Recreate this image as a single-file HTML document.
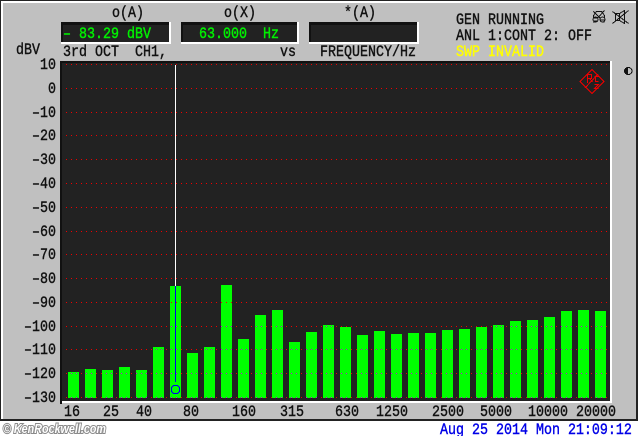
<!DOCTYPE html>
<html><head><meta charset="utf-8"><style>
html,body{margin:0;padding:0;background:#fff;width:640px;height:436px;overflow:hidden}
svg{display:block}
text{font-family:"Liberation Mono",monospace;font-size:13.33px;font-weight:normal;fill:#111;stroke:#111;stroke-width:.35px;white-space:pre}
.c{shape-rendering:crispEdges}
</style></head><body>
<svg width="640" height="436" viewBox="0 0 640 436" xmlns="http://www.w3.org/2000/svg">
<defs><clipPath id="b"><path d="M68 372h11V398h-11zM85 369h11V398h-11zM102 370h11V398h-11zM119 367h11V398h-11zM136 370h11V398h-11zM153 347h11V398h-11zM170 286h11V398h-11zM187 353h11V398h-11zM204 347h11V398h-11zM221 285h11V398h-11zM238 339h11V398h-11zM255 315h11V398h-11zM272 310h11V398h-11zM289 342h11V398h-11zM306 332h11V398h-11zM323 325h11V398h-11zM340 327h11V398h-11zM357 335h11V398h-11zM374 331h11V398h-11zM391 334h11V398h-11zM408 333h11V398h-11zM425 333h11V398h-11zM442 330h11V398h-11zM459 329h11V398h-11zM476 327h11V398h-11zM493 325h11V398h-11zM510 321h11V398h-11zM527 320h11V398h-11zM544 317h11V398h-11zM561 311h11V398h-11zM578 310h11V398h-11zM595 311h11V398h-11z"/></clipPath></defs>
<g class="c">
<rect x="0" y="0" width="638" height="421" fill="#222"/>
<rect x="1" y="1" width="635" height="418" fill="#fff"/>
<rect x="3" y="3" width="633" height="416" fill="#c0c0c0"/>
<!-- display boxes -->
<rect x="61" y="22" width="110" height="22" fill="#fff"/><rect x="61" y="22" width="108" height="20" fill="#111"/><rect x="63" y="25" width="106" height="17" fill="#222"/>
<rect x="181" y="22" width="118" height="22" fill="#fff"/><rect x="181" y="22" width="116" height="20" fill="#111"/><rect x="183" y="25" width="114" height="17" fill="#222"/>
<rect x="309" y="22" width="110" height="22" fill="#fff"/><rect x="309" y="22" width="108" height="20" fill="#111"/><rect x="311" y="25" width="106" height="17" fill="#222"/>
<!-- plot -->
<rect x="60" y="61" width="552" height="342" fill="#fff"/>
<rect x="60" y="61" width="550" height="340" fill="#111"/>
<rect x="62" y="63" width="548" height="338" fill="#222"/>
<rect x="60" y="399" width="2" height="5" fill="#111"/>
<!-- bars -->
<path fill="#0f0" d="M68 372h11V398h-11zM85 369h11V398h-11zM102 370h11V398h-11zM119 367h11V398h-11zM136 370h11V398h-11zM153 347h11V398h-11zM170 286h11V398h-11zM187 353h11V398h-11zM204 347h11V398h-11zM221 285h11V398h-11zM238 339h11V398h-11zM255 315h11V398h-11zM272 310h11V398h-11zM289 342h11V398h-11zM306 332h11V398h-11zM323 325h11V398h-11zM340 327h11V398h-11zM357 335h11V398h-11zM374 331h11V398h-11zM391 334h11V398h-11zM408 333h11V398h-11zM425 333h11V398h-11zM442 330h11V398h-11zM459 329h11V398h-11zM476 327h11V398h-11zM493 325h11V398h-11zM510 321h11V398h-11zM527 320h11V398h-11zM544 317h11V398h-11zM561 311h11V398h-11zM578 310h11V398h-11zM595 311h11V398h-11z"/>
<!-- grid dots -->
<path stroke="#f00000" stroke-width="1" stroke-dasharray="1 4" fill="none" d="M66 64.5H607M66 88.5H576M66 112.5H607M66 135.5H607M66 159.5H607M66 183.5H607M66 207.5H607M66 231.5H607M66 254.5H607M66 278.5H607M66 302.5H607M66 326.5H607M66 349.5H607M66 373.5H607M66 397.5H607"/>
<path clip-path="url(#b)" stroke="#d000e0" stroke-width="1" stroke-dasharray="1 4" fill="none" d="M66 326.5H607M66 349.5H607M66 373.5H607M66 397.5H607"/>
<!-- cursor -->
<rect x="175" y="65" width="1" height="221" fill="#fff"/>
<rect x="175" y="286" width="1" height="96" fill="#0000f0"/>
<!-- cursor ring -->
<path fill="none" stroke="#0000f0" stroke-width="1" d="M173.5 385.5H177.5L179.5 387.5V391.5L177.5 393.5H173.5L171.5 391.5V387.5Z"/>
<!-- R&S logo -->
<g fill="none" stroke="#f00000" stroke-width="1">
<path d="M592 69.5L604 81.5L592 93.5L580 81.5Z"/>
<path d="M585 88L598 74"/>
<path d="M587.5 74.5V83M587.5 74.5H591.5V78.5H587.5M589.5 78.5L592.5 82M594.5 76.5H598.5M595.5 76.5V81.5H598.5M594.5 84.5H598.5L594.5 88.5H598.5"/>
</g>
<!-- headphones icon -->
<g fill="none" stroke="#111" stroke-width="1">
<path d="M593.5 17.5V15.5L596.5 11.5H601.5L604.5 15.5V17.5"/>
<path d="M593.5 11.5L604.5 22.5M604.5 10.5L593.5 22.5"/>
<circle cx="595.5" cy="19.5" r="2.5" fill="#c0c0c0"/>
<circle cx="602.5" cy="19.5" r="2.5" fill="#c0c0c0"/>
<path d="M593 18H598M600 20H605M593 21H598"/>
</g>
<!-- speaker crossed -->
<g fill="none" stroke="#111" stroke-width="1">
<path d="M615.5 13.5H619.5L624.5 10.5V23.5L619.5 20.5H615.5Z"/>
<path d="M612.5 11.5L628.5 23.5M628.5 10.5L612.5 23.5M619.5 13.5V20.5"/>
</g>
<!-- contrast icon -->
<circle cx="628.5" cy="71" r="3.5" fill="#c0c0c0" stroke="#111"/>
<path d="M628 67A4 4 0 0 0 628 75Z" fill="#111"/>
</g>
<!-- text -->
<g>
<text transform="translate(112,17) scale(1,1.15)">o(A)</text>
<text transform="translate(224,17) scale(1,1.15)">o(X)</text>
<text transform="translate(344,17) scale(1,1.15)">*(A)</text>
<text transform="translate(63,38) scale(1,1.15)" style="fill:#00f000;stroke:#00f000">– 83.29 dBV</text>
<text transform="translate(199,38) scale(1,1.15)" style="fill:#00f000;stroke:#00f000">63.000  Hz</text>
<text transform="translate(16,54) scale(1,1.15)">dBV</text>
<text transform="translate(63,56) scale(1,1.15)">3rd OCT  CH1,</text>
<text transform="translate(280,56) scale(1,1.15)">vs</text>
<text transform="translate(320,56) scale(1,1.15)">FREQUENCY/Hz</text>
<text transform="translate(456,24) scale(1,1.15)">GEN RUNNING</text>
<text transform="translate(456,40) scale(1,1.15)">ANL 1:CONT 2: OFF</text>
<text transform="translate(456,56) scale(1,1.15)" style="fill:#ffff00;stroke:#ffff00">SWP INVALID</text>
<text transform="translate(40,69) scale(1,1.15)">10</text>
<text transform="translate(48,93) scale(1,1.15)">0</text>
<text transform="translate(32,117) scale(1,1.15)">–10</text>
<text transform="translate(32,140) scale(1,1.15)">–20</text>
<text transform="translate(32,164) scale(1,1.15)">–30</text>
<text transform="translate(32,188) scale(1,1.15)">–40</text>
<text transform="translate(32,212) scale(1,1.15)">–50</text>
<text transform="translate(32,236) scale(1,1.15)">–60</text>
<text transform="translate(32,259) scale(1,1.15)">–70</text>
<text transform="translate(32,283) scale(1,1.15)">–80</text>
<text transform="translate(32,307) scale(1,1.15)">–90</text>
<text transform="translate(24,331) scale(1,1.15)">–100</text>
<text transform="translate(24,354) scale(1,1.15)">–110</text>
<text transform="translate(24,378) scale(1,1.15)">–120</text>
<text transform="translate(24,402) scale(1,1.15)">–130</text>
<text transform="translate(64,416) scale(1,1.15)">16</text>
<text transform="translate(103,416) scale(1,1.15)">25</text>
<text transform="translate(136,416) scale(1,1.15)">40</text>
<text transform="translate(183,416) scale(1,1.15)">80</text>
<text transform="translate(232,416) scale(1,1.15)">160</text>
<text transform="translate(280,416) scale(1,1.15)">315</text>
<text transform="translate(335,416) scale(1,1.15)">630</text>
<text transform="translate(376,416) scale(1,1.15)">1250</text>
<text transform="translate(432,416) scale(1,1.15)">2500</text>
<text transform="translate(480,416) scale(1,1.15)">5000</text>
<text transform="translate(528,416) scale(1,1.15)">10000</text>
<text transform="translate(576,416) scale(1,1.15)">20000</text>
<text transform="translate(440,434) scale(1,1.15)" style="fill:#0000e6;stroke:#0000e6">Aug 25 2014 Mon 21:09:12</text>
<text x="3" y="433" textLength="103" lengthAdjust="spacingAndGlyphs" style="font-family:'Liberation Sans',sans-serif;font-weight:bold;font-style:italic;font-size:12.5px;fill:#fff;stroke:#8a8a8a;stroke-width:2px;paint-order:stroke">© KenRockwell.com</text>
</g>
</svg>
</body></html>
